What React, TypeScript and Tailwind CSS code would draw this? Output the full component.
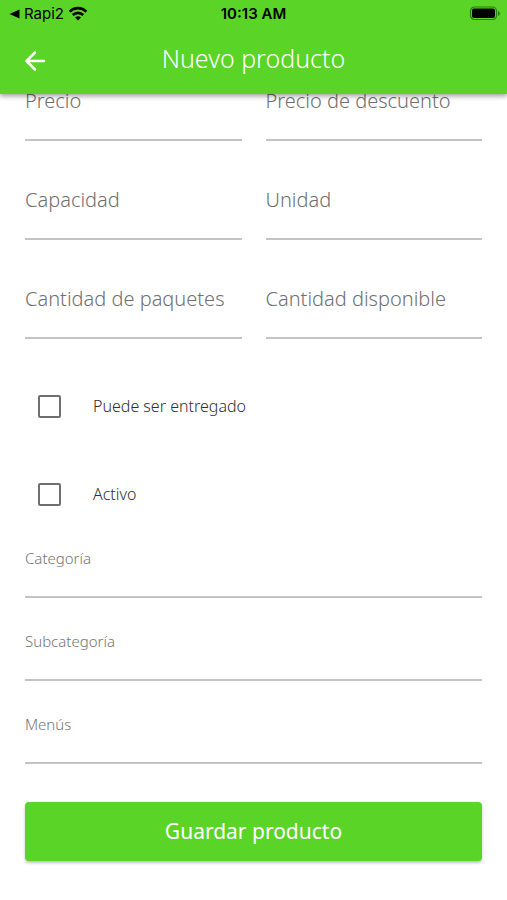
const priceFields = [
  { id: "precio", label: "Precio" },
  { id: "precio-descuento", label: "Precio de descuento" },
  { id: "capacidad", label: "Capacidad" },
  { id: "unidad", label: "Unidad" },
  { id: "cantidad-paquetes", label: "Cantidad de paquetes" },
  { id: "cantidad-disponible", label: "Cantidad disponible" },
];

const checks = [
  { id: "entregado", label: "Puede ser entregado" },
  { id: "activo", label: "Activo" },
];

const selects = [
  { id: "categoria", label: "Categoría" },
  { id: "subcategoria", label: "Subcategoría" },
  { id: "menus", label: "Menús" },
];

function StatusBar() {
  return (
    <div className="grid grid-cols-3 items-center h-7 px-1.5 text-black font-['Inter',sans-serif]">
      <div className="flex items-center gap-1 pl-0.5 text-[15px]">
        <svg className="w-3 h-3" viewBox="0 0 12 12" fill="currentColor">
          <path d="M1.500 6 11.500 1.500v9z" />
        </svg>
        <span>Rapi2</span>
        <svg className="w-5 h-4" viewBox="0 0 20 16" fill="none" stroke="currentColor" strokeWidth="2.600">
          <path d="M1.600 5.600a12 12 0 0 1 16.800 0" />
          <path d="M4.800 9a7.400 7.400 0 0 1 10.400 0" />
          <path d="M10 14.500 7.100 11.600a4.200 4.200 0 0 1 5.800 0z" fill="currentColor" stroke="none" />
        </svg>
      </div>
      <span className="text-center text-[15px] font-semibold">10:13 AM</span>
      <svg className="justify-self-end w-8 h-4" viewBox="0 0 32 16">
        <rect x="1.500" y="1" width="26" height="12.500" rx="4" fill="none" stroke="#2d7a12" strokeWidth="1.200" />
        <rect x="3" y="2.500" width="23" height="9.500" rx="2" fill="#000" />
        <path d="M29 5c2.400.8 2.400 4.200 0 5z" fill="#2d7a12" />
      </svg>
    </div>
  );
}

function Header() {
  return (
    <header className="sticky top-0 z-10 bg-[#5ad427] shadow-[0_2px_5px_rgba(0,0,0,0.4)]">
      <StatusBar />
      <div className="grid grid-cols-[40px_1fr_40px] items-center h-[66px] px-[15px]">
        <button type="button" aria-label="Volver" className="flex items-center justify-center h-10 text-white">
          <svg className="w-6 h-6" viewBox="0 0 24 24" fill="none" stroke="currentColor" strokeWidth="2.500" strokeLinecap="round" strokeLinejoin="round">
            <path d="M21 12H3.500M12 3.500 3.500 12l8.500 8.500" />
          </svg>
        </button>
        <h1 className="pb-1 text-center text-[25px] font-light text-white">Nuevo producto</h1>
      </div>
    </header>
  );
}

export default function App() {
  return (
    <div className="min-h-screen bg-white font-['Noto_Sans','Open_Sans',sans-serif]">
      <Header />

      {/* El contenido queda desplazado bajo la cabecera */}
      <form className="-mt-[7px] px-[25px] pb-10">
        <div className="grid grid-cols-2 gap-x-6 gap-y-[45px]">
          {priceFields.map((field) => (
            <div key={field.id} className="flex flex-col">
              <label htmlFor={field.id} className="text-xl leading-7 font-light text-[#707070] whitespace-nowrap">
                {field.label}
              </label>
              <input
                id={field.id}
                type="text"
                className="w-full h-[26px] border-b-2 border-[#c4c4c4] bg-transparent outline-none"
              />
            </div>
          ))}
        </div>

        <div className="mt-[23px]">
          {checks.map((check) => (
            <div key={check.id} className="flex items-center h-[88px] pl-[13px]">
              <input
                id={check.id}
                type="checkbox"
                className="appearance-none w-[23px] h-[23px] border-2 border-[#707070] rounded-xs checked:bg-[#5ad427]"
              />
              <label htmlFor={check.id} className="pl-8 text-base font-light text-[#303030]">
                {check.label}
              </label>
            </div>
          ))}
        </div>

        <div className="flex flex-col gap-[31px] mt-2">
          {selects.map((select) => (
            <div key={select.id} className="flex flex-col">
              <label htmlFor={select.id} className="text-[15px] leading-6 font-light text-[#757575]">
                {select.label}
              </label>
              <select
                id={select.id}
                className="appearance-none w-full h-7 border-b-2 border-[#c4c4c4] bg-transparent outline-none"
              />
            </div>
          ))}
        </div>

        <button
          type="button"
          className="w-full h-[59px] mt-[38px] rounded-sm bg-[#5ad427] text-[21px] text-white shadow-[0_2px_3px_rgba(0,0,0,0.25)]"
        >
          Guardar producto
        </button>
      </form>
    </div>
  );
}
